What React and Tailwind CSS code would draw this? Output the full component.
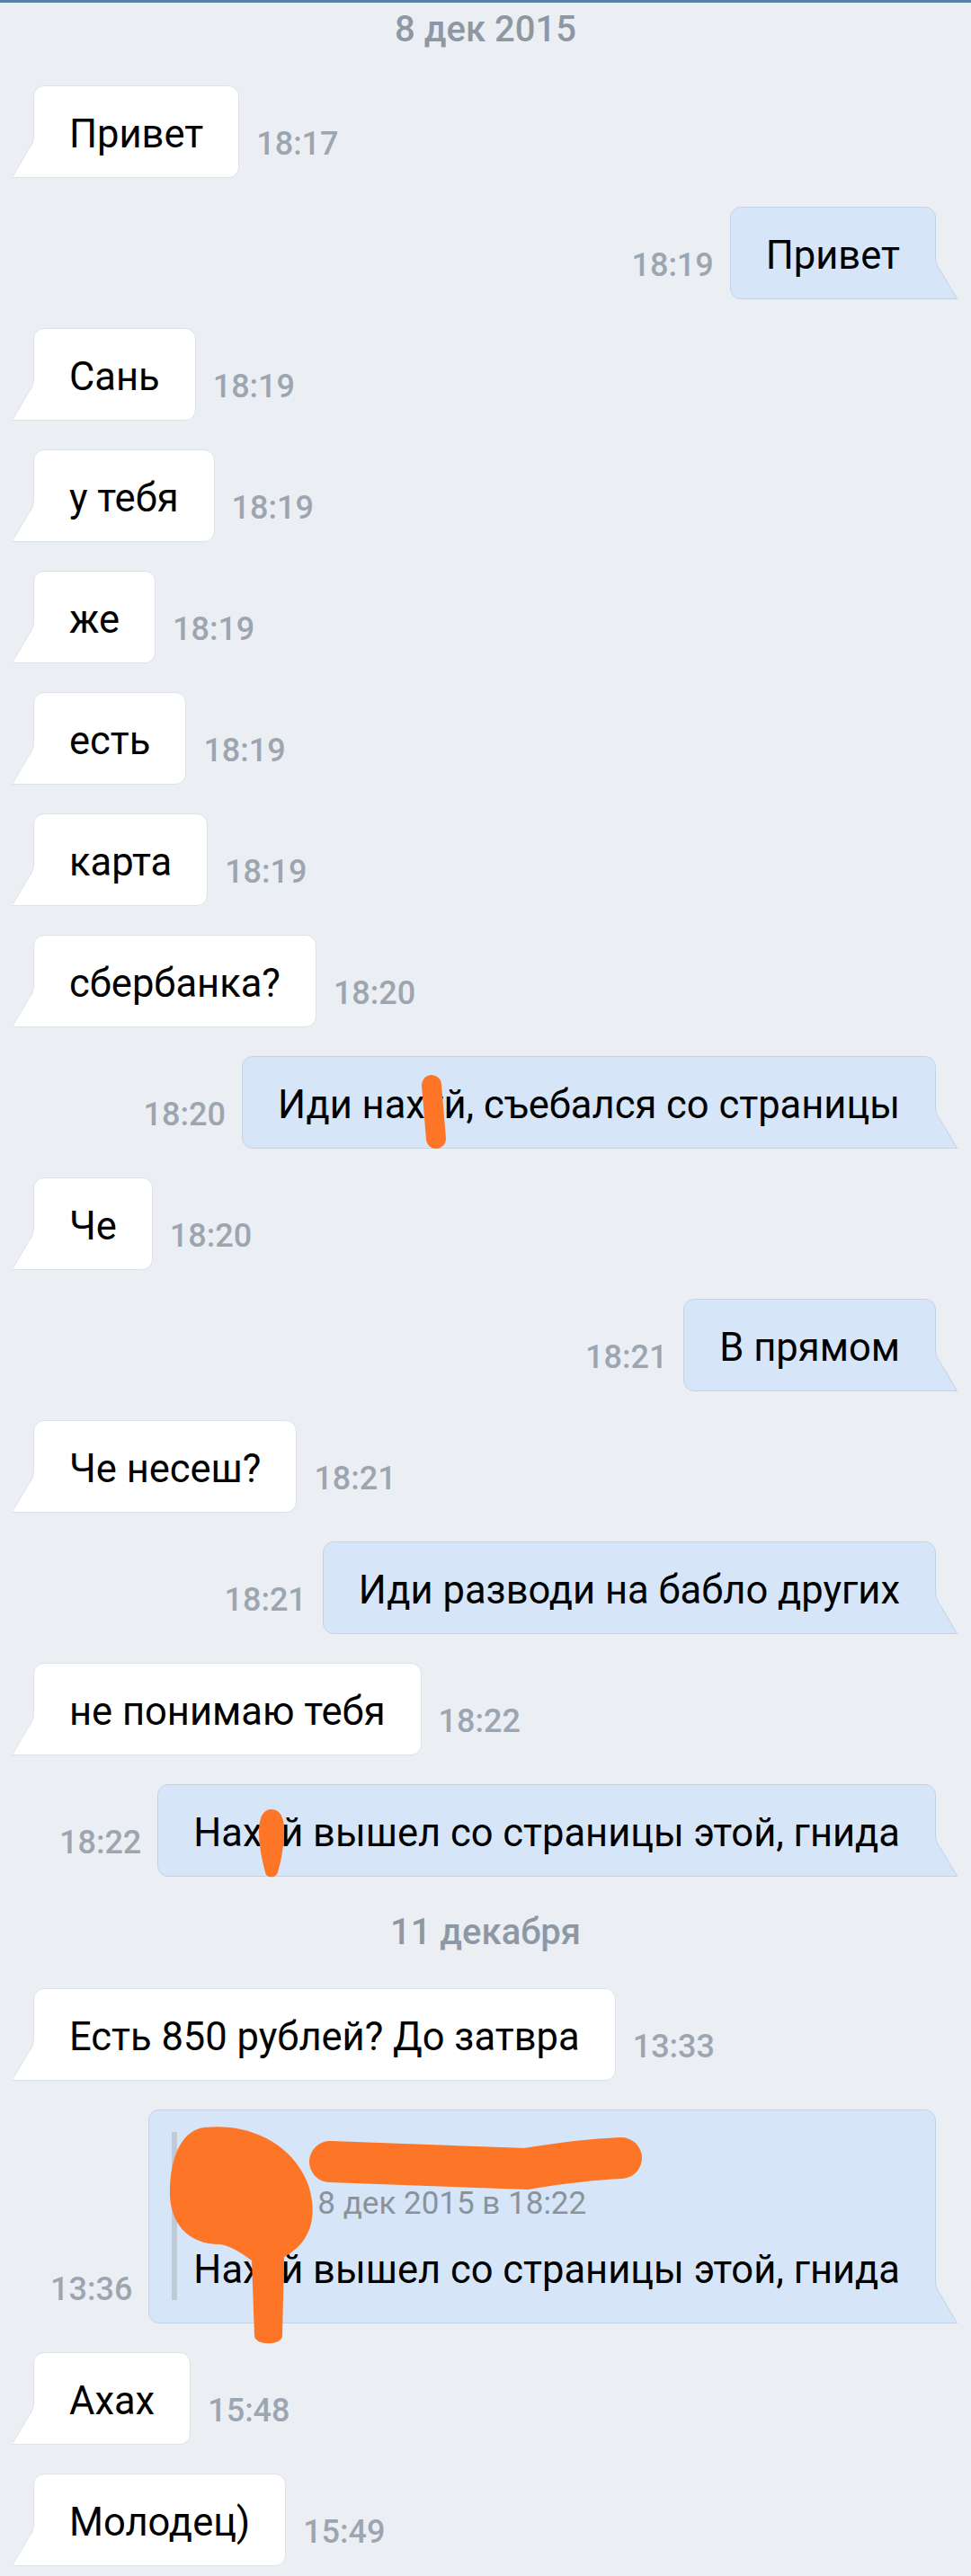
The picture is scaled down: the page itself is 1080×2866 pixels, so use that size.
import React from 'react';

const FONT = { fontFamily: 'Roboto, "Noto Sans", "DejaVu Sans", sans-serif' };

const messages = [
    { out: false, text: 'Привет', time: '18:17' },
    { out: true, text: 'Привет', time: '18:19' },
    { out: false, text: 'Сань', time: '18:19' },
    { out: false, text: 'у тебя', time: '18:19' },
    { out: false, text: 'же', time: '18:19' },
    { out: false, text: 'есть', time: '18:19' },
    { out: false, text: 'карта', time: '18:19' },
    { out: false, text: 'сбербанка?', time: '18:20' },
    { out: true, text: ['Иди нах', 'у', 'й, съебался со страницы'], censor: 'thin', time: '18:20' },
    { out: false, text: 'Че', time: '18:20' },
    { out: true, text: 'В прямом', time: '18:21' },
    { out: false, text: 'Че несеш?', time: '18:21' },
    { out: true, text: 'Иди разводи на бабло других', time: '18:21' },
    { out: false, text: 'не понимаю тебя', time: '18:22' },
    { out: true, text: ['Нах', 'у', 'й вышел со страницы этой, гнида'], censor: 'blob', time: '18:22' },
];

// bubble tail in the bottom corner
const Tail = ({ out }) => {
    if (out) {
        return (
            <svg
                width="28"
                height="48"
                viewBox="0 0 28 48"
                className="absolute bottom-[-1px] right-[-26px] overflow-visible"
            >
                <path d="M2.5 0 C2.5 8 5 12 8 16 L27 47.5 L0 47.5 L0 0 Z" fill="#d6e6f8" />
                <path d="M2.5 0 C2.5 8 5 12 8 16 L26.5 47.5 L0 47.5" fill="none" stroke="#c3d3e6" strokeWidth="1" />
            </svg>
        );
    }
    return (
        <svg
            width="28"
            height="48"
            viewBox="0 0 28 48"
            className="absolute bottom-[-1px] left-[-26px] overflow-visible"
        >
            <path d="M25.5 0 C25.5 8 23 12 20 16 L1 47.5 L28 47.5 L28 0 Z" fill="#ffffff" />
            <path d="M25.5 0 C25.5 8 23 12 20 16 L1.5 47.5 L28 47.5" fill="none" stroke="#dde2e8" strokeWidth="1" />
        </svg>
    );
};

const Censor = ({ kind }) => {
    if (kind === 'blob') {
        return (
            <svg
                width="40"
                height="80"
                viewBox="0 0 40 80"
                className="absolute left-1/2 top-[-3px] -translate-x-1/2 pointer-events-none"
            >
                <path
                    d="M20 2 C31 2 35 14 34 30 C33 48 30 62 27 72 C25 79 14 79 13 72 C10 60 6 44 6 28 C6 12 10 2 20 2 Z"
                    fill="#fd7526"
                />
            </svg>
        );
    }
    return (
        <svg
            width="36"
            height="84"
            viewBox="0 0 36 84"
            className="absolute left-1/2 top-[-9px] -translate-x-1/2 pointer-events-none"
        >
            <path d="M15 12 L20 72" stroke="#fd7526" strokeWidth="22" strokeLinecap="round" fill="none" />
        </svg>
    );
};

const Time = ({ children, out }) => (
    <span
        className={`self-end mb-[20px] text-[36px] leading-[36px] font-medium text-[#9da6b0] whitespace-nowrap ${out ? 'mr-[18px]' : 'ml-[19px]'}`}
    >
        {children}
    </span>
);

const Bubble = ({ msg }) => {
    const body = Array.isArray(msg.text) ? (
        <>
            {msg.text[0]}
            <span className="relative">
                {msg.text[1]}
                <Censor kind={msg.censor} />
            </span>
            {msg.text[2]}
        </>
    ) : msg.text;

    return (
        <div
            className={`relative border px-[39px] pt-[27px] pb-[20px] text-[43.5px] leading-[54px] text-black whitespace-nowrap ${
                msg.out
                    ? 'bg-[#d6e6f8] border-[#c3d3e6] rounded-[12px] rounded-br-none'
                    : 'bg-white border-[#dde2e8] rounded-[12px] rounded-bl-none'
            }`}
        >
            {body}
            <Tail out={msg.out} />
        </div>
    );
};

const Row = ({ msg }) => {
    if (msg.out) {
        return (
            <div className="flex justify-end items-end pr-[39px]">
                <Time out>{msg.time}</Time>
                <Bubble msg={msg} />
            </div>
        );
    }
    return (
        <div className="flex items-end pl-[37px]">
            <Bubble msg={msg} />
            <Time>{msg.time}</Time>
        </div>
    );
};

const DateLabel = ({ children }) => (
    <div className="h-[60px] flex items-center justify-center text-[40px] font-medium text-[#8e98a4]">
        {children}
    </div>
);

// forwarded message with hidden avatar and name
const QuoteRow = () => (
    <div className="flex justify-end items-end pr-[39px]">
        <Time out>13:36</Time>
        <div className="relative bg-[#d6e6f8] border border-[#c3d3e6] rounded-[12px] rounded-br-none pt-[24px] pb-[25px] pl-[25px] pr-[39px]">
            <div className="border-l-[6px] border-[#bfcad8] pl-[18px] pb-[6px]">
                <div className="flex items-start h-[108px]">
                    <div className="w-[108px] h-[108px] rounded-full bg-[#b9c6d4] shrink-0" />
                    <div className="ml-[30px] flex flex-col">
                        <div className="h-[58px]" />
                        <div className="text-[35px] leading-[44px] text-[#8a939d] whitespace-nowrap">8 дек 2015 в 18:22</div>
                    </div>
                </div>
                <div className="mt-[19px] text-[43.5px] leading-[54px] text-black whitespace-nowrap">
                    Нахуй вышел со страницы этой, гнида
                </div>
            </div>
            <svg
                width="560"
                height="270"
                viewBox="0 0 560 270"
                className="absolute left-[-1px] top-[-1px] overflow-visible pointer-events-none"
            >
                <path
                    d="M62 20 C114 14 162 40 178 84 C190 122 178 150 151 164 L149 252 C148 263 119 263 118 252 L115 168 C104 160 92 152 80 150 C42 150 22 124 24 86 C26 46 40 23 62 20 Z"
                    fill="#fd7526"
                />
                <path
                    d="M202 58 Q 320 62 420 66 Q 480 56 526 54"
                    stroke="#fd7526"
                    strokeWidth="46"
                    strokeLinecap="round"
                    fill="none"
                />
            </svg>
            <Tail out />
        </div>
    </div>
);

export default function App() {
    return (
        <div className="w-[1080px] min-h-[2866px] bg-[#ebeff4]" style={FONT}>
            <div className="h-[3px] bg-[#5a7fa8]" />
            <div className="flex flex-col gap-[32px] pb-[12px]">
                <DateLabel>8 дек 2015</DateLabel>
                {messages.map((m, i) => (
                    <Row key={i} msg={m} />
                ))}
                <DateLabel>11 декабря</DateLabel>
                <Row msg={{ out: false, text: 'Есть 850 рублей? До затвра', time: '13:33' }} />
                <QuoteRow />
                <Row msg={{ out: false, text: 'Ахах', time: '15:48' }} />
                <Row msg={{ out: false, text: 'Молодец)', time: '15:49' }} />
            </div>
        </div>
    );
}
